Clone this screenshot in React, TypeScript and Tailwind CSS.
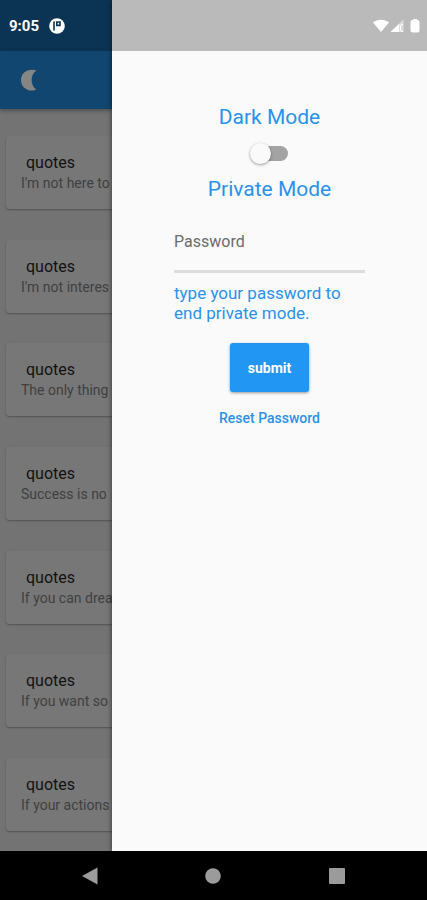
import { useState } from "react";

const quotes = [
  "I'm not here to",
  "I'm not interes",
  "The only thing",
  "Success is no",
  "If you can drea",
  "If you want so",
  "If your actions",
];

function QuoteCard({ text }: { text: string }) {
  return (
    <li className="h-[73px] rounded-l-sm bg-[#777777] pt-[17px] pl-[15px] whitespace-nowrap shadow-[0_1px_2px_rgba(0,0,0,0.3)]">
      <h2 className="pl-[5px] text-base leading-5 text-[#121212]">quotes</h2>
      <p className="text-sm leading-5 text-[#404040]">{text}</p>
    </li>
  );
}

function StatusIcons() {
  return (
    <svg width="48" height="16" viewBox="0 0 48 16" fill="#ffffff" aria-hidden="true">
      <path d="M0 4.6C4.4 0.9 11.6 0.9 16 4.6L8 14z" />
      <path d="M30.500 1.500V14H17.500z" fillOpacity="0.5" />
      <path d="M26 6V14H17.500z" />
      <path d="M30 6.500h-1q-1.500 0-1.500 2v3q0 2 1.500 2h1" fill="none" stroke="#ffffff" strokeWidth="1" />
      <path d="M40 2V1h4v1h0.500q2 0 2 2v8.500q0 2-2 2h-5q-2 0-2-2V4q0-2 2-2z" />
    </svg>
  );
}

export default function App() {
  const [dark, setDark] = useState(false);
  const [password, setPassword] = useState("");

  return (
    <div className="flex min-h-dvh flex-col bg-black font-[Roboto,sans-serif]">
      <div className="flex flex-1">
        <div className="flex w-28 shrink-0 flex-col overflow-hidden bg-[#737373]">
          <div className="flex h-[51px] items-center gap-2.5 bg-[#0b3353] pl-[9px] text-white">
            <span className="text-[15px] leading-5 font-bold">9:05</span>
            <svg width="16" height="16" viewBox="0 0 16 16" aria-hidden="true">
              <circle cx="8" cy="8" r="7.800" fill="#ffffff" />
              <path d="M5 3.500v9M7.800 4h3.200v3.400H7.800z" fill="none" stroke="#0b3353" strokeWidth="1.600" />
            </svg>
          </div>
          <header className="flex h-[58px] items-center bg-[#10466f] pl-5 shadow-[0_2px_4px_rgba(0,0,0,0.3)]">
            <button type="button" aria-label="Toggle theme">
              <svg width="18" height="22" viewBox="0 0 18 22" fill="#858585" aria-hidden="true">
                <path d="M16.500 1.400C11 -0.800 1 1.500 1 11s10 12.200 15.500 9.600C10 17 10 5 16.500 1.400z" />
              </svg>
            </button>
          </header>
          <ul className="flex flex-1 flex-col justify-between gap-4 pt-[27px] pb-5 pl-1.5">
            {quotes.map((q) => (
              <QuoteCard key={q} text={q} />
            ))}
          </ul>
        </div>

        <aside className="z-10 min-w-0 flex-1 bg-[#fafafa] shadow-[0_0_5px_rgba(0,0,0,0.6)]">
          <div className="flex h-[51px] items-center justify-end bg-[#bababa] pr-1.5">
            <StatusIcons />
          </div>

          <div className="flex flex-col items-center pt-[54px] text-[#2b92ec]">
            <label htmlFor="dark-mode" className="text-[21px] leading-6">
              Dark Mode
            </label>
            <span className="relative mt-3 flex h-6 w-10 items-center">
              <input
                id="dark-mode"
                type="checkbox"
                role="switch"
                checked={dark}
                onChange={(e) => setDark(e.target.checked)}
                className="peer ml-1 h-[15px] w-[34px] appearance-none rounded-full bg-[#a3a3a3] checked:bg-[#90caf9]"
              />
              <span className="pointer-events-none absolute left-0 h-[21px] w-[21px] rounded-full bg-[#fafafa] shadow-[0_1px_3px_rgba(0,0,0,0.4)] peer-checked:left-5 peer-checked:bg-[#2196f3]" />
            </span>
            <h2 className="mt-3 text-[21px] leading-6">Private Mode</h2>

            <form className="mt-6 flex w-[191px] flex-col" onSubmit={(e) => e.preventDefault()}>
              <input
                type="password"
                aria-label="Password"
                placeholder="Password"
                value={password}
                onChange={(e) => setPassword(e.target.value)}
                className="h-[45px] pb-3 text-base text-[#333333] outline-none placeholder:text-[#6c6c6c]"
              />
              <div className="h-[3px] bg-[#dcdcdc]" />
              <p className="mt-2.5 text-[17px] leading-5">type your password to end private mode.</p>
              <button
                type="submit"
                className="mt-5 h-[49px] w-[79px] self-center rounded-[3px] bg-[#2196f3] text-sm font-bold text-white shadow-[0_1px_3px_rgba(0,0,0,0.4)]"
              >
                submit
              </button>
              <button type="button" className="mt-4 self-center text-sm leading-5 font-medium">
                Reset Password
              </button>
            </form>
          </div>
        </aside>
      </div>

      <nav className="flex h-[49px] items-center justify-around bg-black px-7">
        <button type="button" aria-label="Back">
          <svg width="18" height="18" viewBox="0 0 18 18" fill="#9b9b9b" aria-hidden="true">
            <path d="M1 9L16.500 0.500v17z" />
          </svg>
        </button>
        <button type="button" aria-label="Home">
          <svg width="18" height="18" viewBox="0 0 18 18" fill="#9b9b9b" aria-hidden="true">
            <circle cx="9" cy="9" r="7.800" />
          </svg>
        </button>
        <button type="button" aria-label="Recent apps">
          <svg width="18" height="18" viewBox="0 0 18 18" fill="#9b9b9b" aria-hidden="true">
            <rect x="1" y="1" width="16" height="16" rx="1" />
          </svg>
        </button>
      </nav>
    </div>
  );
}
